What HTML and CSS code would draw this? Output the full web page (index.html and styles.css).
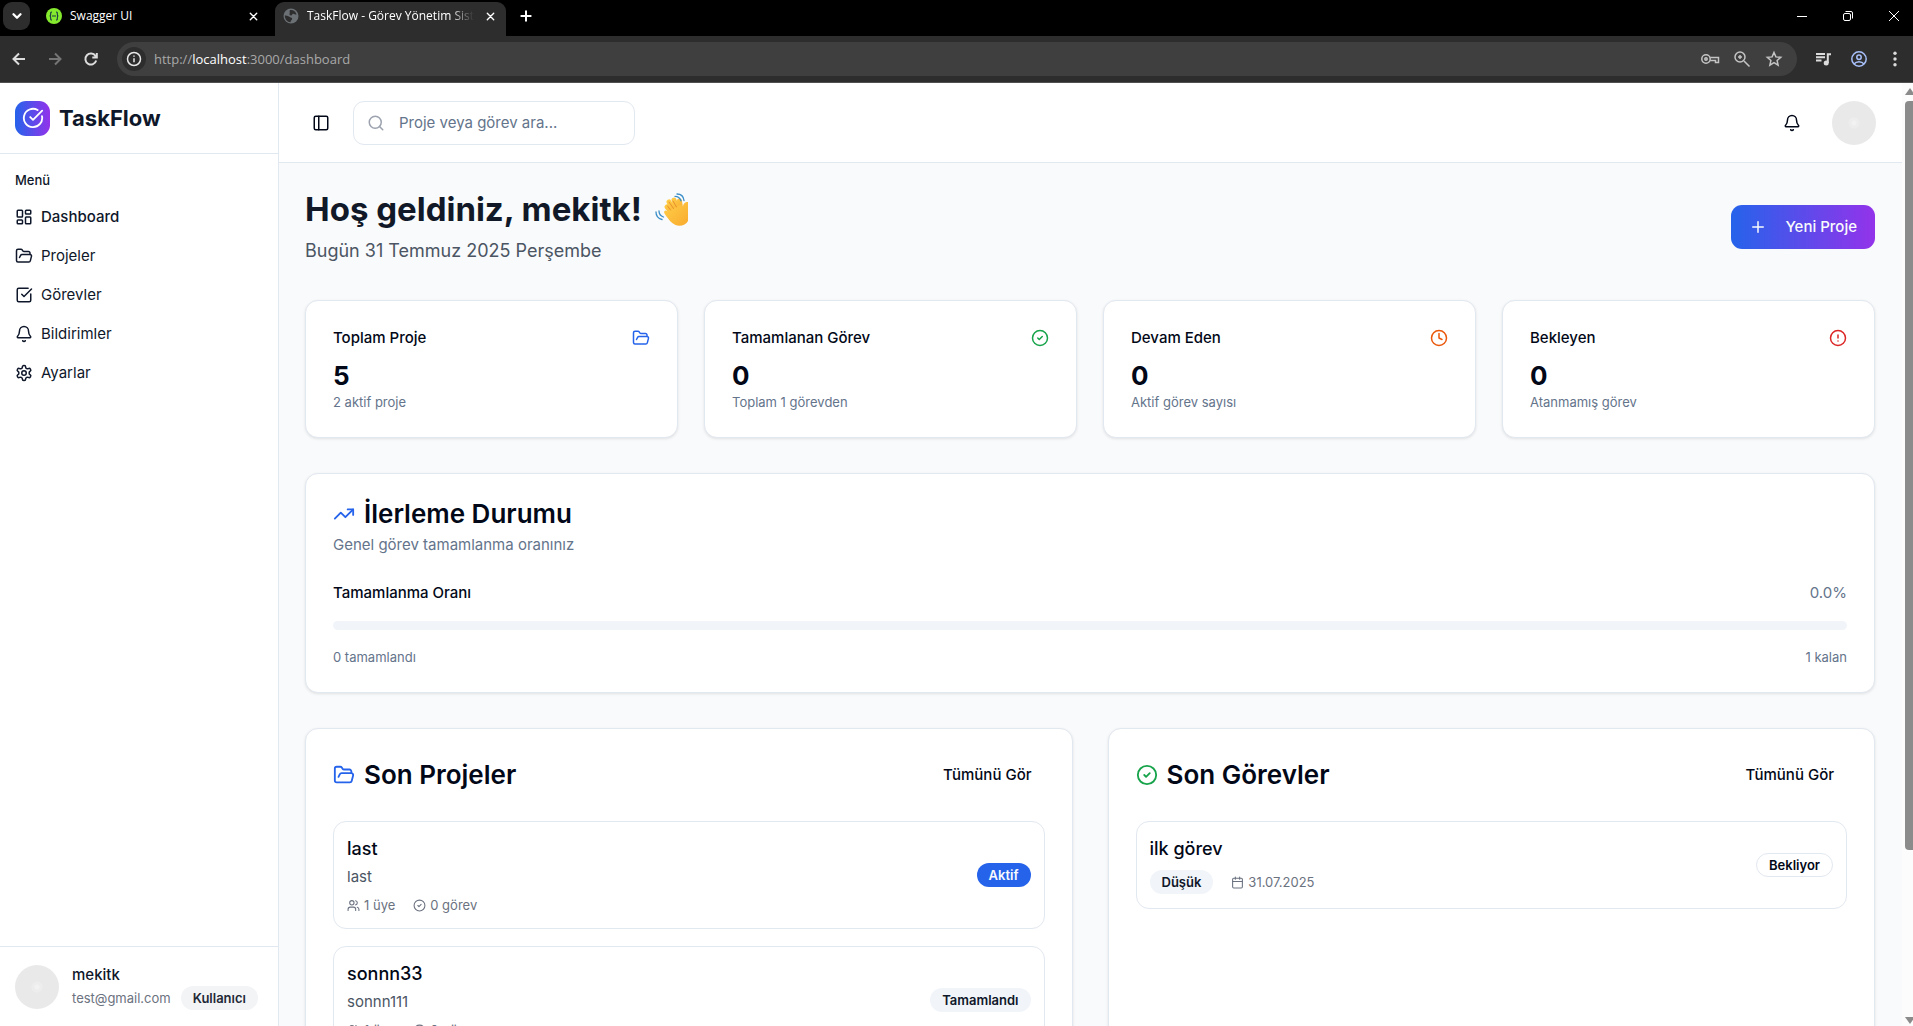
FILE: index.html
```html
<!DOCTYPE html>
<html lang="tr">
<head>
<meta charset="utf-8">
<title>TaskFlow - Görev Yönetim Sistemi</title>
<link rel="stylesheet" href="styles.css">
</head>
<body>
<svg class="sprite" aria-hidden="true">
  <symbol id="check-circle" viewBox="0 0 24 24"><path d="M21.801 10A10 10 0 1 1 17 3.335"/><path d="m9 11 3 3L22 4"/></symbol>
  <symbol id="circle-check" viewBox="0 0 24 24"><circle cx="12" cy="12" r="10"/><path d="m9 12 2 2 4-4"/></symbol>
  <symbol id="dashboard" viewBox="0 0 24 24"><rect width="7" height="9" x="3" y="3" rx="1"/><rect width="7" height="5" x="14" y="3" rx="1"/><rect width="7" height="9" x="14" y="12" rx="1"/><rect width="7" height="5" x="3" y="16" rx="1"/></symbol>
  <symbol id="folder" viewBox="0 0 24 24"><path d="m6 14 1.5-2.9A2 2 0 0 1 9.24 10H20a2 2 0 0 1 1.94 2.5l-1.54 6a2 2 0 0 1-1.95 1.5H4a2 2 0 0 1-2-2V5a2 2 0 0 1 2-2h3.9a2 2 0 0 1 1.69.9l.81 1.2a2 2 0 0 0 1.67.9H18a2 2 0 0 1 2 2v2"/></symbol>
  <symbol id="check-square" viewBox="0 0 24 24"><path d="M21 10.500V19a2 2 0 0 1-2 2H5a2 2 0 0 1-2-2V5a2 2 0 0 1 2-2h12.500"/><path d="m9 11 3 3L22 4"/></symbol>
  <symbol id="bell" viewBox="0 0 24 24"><path d="M10.268 21a2 2 0 0 0 3.464 0"/><path d="M3.262 15.326A1 1 0 0 0 4 17h16a1 1 0 0 0 .74-1.673C19.410 13.956 18 12.499 18 8A6 6 0 0 0 6 8c0 4.499-1.411 5.956-2.738 7.326"/></symbol>
  <symbol id="gear" viewBox="0 0 24 24"><path d="M12.220 2h-.44a2 2 0 0 0-2 2v.18a2 2 0 0 1-1 1.730l-.43.25a2 2 0 0 1-2 0l-.15-.08a2 2 0 0 0-2.730.73l-.22.38a2 2 0 0 0 .73 2.730l.15.1a2 2 0 0 1 1 1.720v.51a2 2 0 0 1-1 1.740l-.15.09a2 2 0 0 0-.73 2.730l.22.38a2 2 0 0 0 2.730.73l.15-.08a2 2 0 0 1 2 0l.43.25a2 2 0 0 1 1 1.730V20a2 2 0 0 0 2 2h.44a2 2 0 0 0 2-2v-.18a2 2 0 0 1 1-1.730l.43-.25a2 2 0 0 1 2 0l.15.08a2 2 0 0 0 2.730-.73l.22-.39a2 2 0 0 0-.73-2.730l-.15-.08a2 2 0 0 1-1-1.740v-.5a2 2 0 0 1 1-1.740l.15-.09a2 2 0 0 0 .73-2.730l-.22-.38a2 2 0 0 0-2.730-.73l-.15.08a2 2 0 0 1-2 0l-.43-.25a2 2 0 0 1-1-1.730V4a2 2 0 0 0-2-2z"/><circle cx="12" cy="12" r="3"/></symbol>
  <symbol id="panel" viewBox="0 0 24 24"><rect width="18" height="18" x="3" y="3" rx="2"/><path d="M9 3v18"/></symbol>
  <symbol id="search" viewBox="0 0 24 24"><circle cx="11" cy="11" r="8"/><path d="m21 21-4.300-4.300"/></symbol>
  <symbol id="plus" viewBox="0 0 24 24"><path d="M5 12h14M12 5v14"/></symbol>
  <symbol id="clock" viewBox="0 0 24 24"><circle cx="12" cy="12" r="10"/><path d="M12 6v6l4 2"/></symbol>
  <symbol id="alert" viewBox="0 0 24 24"><circle cx="12" cy="12" r="10"/><path d="M12 8v4M12 16h.01"/></symbol>
  <symbol id="trend" viewBox="0 0 24 24"><path d="m22 7-8.500 8.500-5-5L2 17"/><path d="M16 7h6v6"/></symbol>
  <symbol id="users" viewBox="0 0 24 24"><path d="M16 21v-2a4 4 0 0 0-4-4H6a4 4 0 0 0-4 4v2"/><circle cx="9" cy="7" r="4"/><path d="M22 21v-2a4 4 0 0 0-3-3.870M16 3.130a4 4 0 0 1 0 7.750"/></symbol>
  <symbol id="calendar" viewBox="0 0 24 24"><path d="M8 2v4M16 2v4M3 10h18"/><rect width="18" height="18" x="3" y="4" rx="2"/></symbol>
  <symbol id="x" viewBox="0 0 24 24"><path d="M5 5l14 14M19 5L5 19"/></symbol>
</svg>

<div class="window">
  <header class="tabstrip">
    <button class="tab-search" aria-label="Sekmelerde ara"><svg class="icon" viewBox="0 0 12 12"><path d="M3 4.500l3 3 3-3"/></svg></button>
    <div class="tab">
      <svg class="favicon" viewBox="0 0 16 16"><circle cx="8" cy="8" r="8" fill="#85ea2d"/><g fill="none" stroke="#173647" stroke-width="1.100"><path d="M6 4c-1.600 0-1.300 1.200-1.300 2.300S4.200 8 3.600 8c.6 0 1.100.6 1.100 1.700S4.400 12 6 12M10 4c1.600 0 1.300 1.200 1.300 2.300S11.800 8 12.400 8c-.6 0-1.100.6-1.100 1.700S11.600 12 10 12M6 8h4"/></g></svg>
      <span class="tab-title">Swagger UI</span>
      <button class="tab-close" aria-label="Kapat"><svg class="icon"><use href="#x"/></svg></button>
    </div>
    <div class="tab tab-active">
      <svg class="favicon" viewBox="0 0 16 16"><circle cx="8" cy="8" r="7.500" fill="#6b7075"/><path fill="#2d2d2d" d="M7 2c3-.6 6 1.500 6.500 4.500-1.500.5-2-1-3.500-.8-1 .2-.6 1.600-2 1.700-1.400 0-1.800-1-1.300-2.100C7.200 4.200 6 3.500 7 2zM1.800 7.500c2-.3 3.700.5 5 1.600 1.300 1 2.200.2 2.400 1.600.1 1.500-1.200 1.300-1.400 2.300l-.3 1.300C4.300 14.100 1.700 11 1.800 7.500z"/></svg>
      <span class="tab-title tab-title-fade">TaskFlow - Görev Yönetim Sistemi</span>
      <button class="tab-close" aria-label="Kapat"><svg class="icon"><use href="#x"/></svg></button>
    </div>
    <button class="new-tab" aria-label="Yeni sekme"><svg class="icon"><use href="#plus"/></svg></button>
    <div class="window-controls">
      <button aria-label="Küçült"><svg viewBox="0 0 12 12"><path d="M1 6.500h10"/></svg></button>
      <button aria-label="Geri yükle"><svg viewBox="0 0 12 12"><rect x="1.500" y="3.500" width="7" height="7" rx="1.500"/><path d="M3.500 1.500H9a1.500 1.500 0 0 1 1.500 1.500v5.500"/></svg></button>
      <button aria-label="Pencereyi kapat"><svg viewBox="0 0 12 12"><path d="M1 1l10 10M11 1L1 11"/></svg></button>
    </div>
  </header>

  <div class="toolbar">
    <button class="nav-button" aria-label="Geri"><svg class="icon" viewBox="0 0 16 16"><path d="M14 8H2.500M8 2.500L2.500 8 8 13.500"/></svg></button>
    <button class="nav-button nav-off" aria-label="İleri"><svg class="icon" viewBox="0 0 16 16"><path d="M2 8h11.500M8 2.500L13.500 8 8 13.500"/></svg></button>
    <button class="nav-button" aria-label="Yenile"><svg class="icon" viewBox="0 0 16 16"><path d="M13.200 9.500A5.500 5.500 0 1 1 12.500 5l1 1.200M13.800 2v4.500H9.300"/></svg></button>
    <div class="address">
      <span class="site-info"><svg class="icon" viewBox="0 0 16 16"><circle cx="8" cy="8" r="6.500"/><path d="M8 7.200v4M8 4.400v1.400"/></svg></span>
      <span class="url">http://<b>localhost</b>:3000/dashboard</span>
      <svg class="address-icon" viewBox="0 0 20 20"><circle cx="6" cy="10" r="4.200"/><circle cx="6" cy="10" r="1.200"/><path d="M10.200 8.500h8.300v5h-3v-2h-5.300"/></svg>
      <svg class="address-icon" viewBox="0 0 20 20"><circle cx="8" cy="8" r="5"/><path d="M12 12l5.500 5.500M8 6v4M6 8h4"/></svg>
      <svg class="address-icon" viewBox="0 0 20 20"><path d="M10 3.500l1.900 4.400 4.800.4-3.600 3.200 1 4.700-4.100-2.500-4.100 2.500 1-4.700-3.600-3.200 4.800-.4z"/></svg>
    </div>
    <button class="nav-button" aria-label="Medya"><svg class="icon" viewBox="0 0 16 16"><path d="M1 3h9M1 6.300h9M1 9.600h5.500M12.800 12V3.200H16"/><circle cx="11.200" cy="12" r="1.500" fill="currentColor"/></svg></button>
    <button class="nav-button profile" aria-label="Profil"><svg class="icon" viewBox="0 0 16 16"><circle cx="8" cy="8" r="7.200"/><circle cx="8" cy="6.200" r="2.200"/><path d="M3 13c2.500-3 7.500-3 10 0"/></svg></button>
    <button class="nav-button" aria-label="Menü"><svg viewBox="0 0 16 16"><g fill="#dcdcdc"><circle cx="8" cy="2.300" r="1.700"/><circle cx="8" cy="8" r="1.700"/><circle cx="8" cy="13.700" r="1.700"/></g></svg></button>
  </div>

  <div class="app">
    <aside class="sidebar">
      <div class="brand">
        <span class="brand-mark"><svg class="icon"><use href="#check-circle"/></svg></span>
        <span class="brand-name">TaskFlow</span>
      </div>
      <nav class="menu">
        <div class="menu-label">Menü</div>
        <a class="menu-item menu-current" href="#dashboard-page"><svg class="icon"><use href="#dashboard"/></svg>Dashboard</a>
        <a class="menu-item" href="#projects"><svg class="icon"><use href="#folder"/></svg>Projeler</a>
        <a class="menu-item" href="#tasks"><svg class="icon"><use href="#check-square"/></svg>Görevler</a>
        <a class="menu-item" href="#notifications"><svg class="icon"><use href="#bell"/></svg>Bildirimler</a>
        <a class="menu-item" href="#settings"><svg class="icon"><use href="#gear"/></svg>Ayarlar</a>
      </nav>
      <div class="account">
        <span class="avatar"></span>
        <div class="account-text">
          <div class="account-name">mekitk</div>
          <div class="account-row"><span>test@gmail.com</span><span class="badge badge-gray">Kullanıcı</span></div>
        </div>
      </div>
    </aside>

    <div class="content">
      <header class="topbar">
        <button class="icon-button" aria-label="Kenar çubuğu"><svg class="icon"><use href="#panel"/></svg></button>
        <label class="search"><svg class="icon"><use href="#search"/></svg><input type="search" placeholder="Proje veya görev ara..." aria-label="Proje veya görev ara"></label>
        <div class="topbar-end">
          <button class="icon-button" aria-label="Bildirimler"><svg class="icon"><use href="#bell"/></svg></button>
          <span class="avatar"></span>
        </div>
      </header>

      <main class="page" id="dashboard-page">
        <section class="welcome">
          <div>
            <h1>Hoş geldiniz, mekitk!
              <svg class="wave" viewBox="0 0 33 34" role="img" aria-label="El sallama">
                <defs><linearGradient id="skin" x1="0" y1="0" x2="1" y2="1"><stop offset="0" stop-color="#ffcf4a"/><stop offset="1" stop-color="#f9ab2e"/></linearGradient></defs>
                <g fill="none" stroke="url(#skin)" stroke-linecap="round"><path stroke-width="5" d="M17 20L12 14M20 19L14 9M23 18L19 7M26 18L24.500 8"/></g>
                <path fill="url(#skin)" d="M9.500 20.500c-1.500-2 1-4 2.800-2.300L26 12l2 2c0-4 3-5.500 5-5V28c-2 4-8 6-12.500 4C16 30 12.500 25 9.500 20.500z"/>
                <path fill="none" stroke="#e8912d" stroke-width="1" stroke-linecap="round" d="M15.500 17L12.500 13M18.500 15.500L14 9M21.500 14L18 8"/>
                <path fill="none" stroke="#3b8fc9" stroke-width="1.300" stroke-linecap="round" d="M20 3.300c3 0 5 1.500 6 4.500M22 1c4 0 6.500 2.500 7 6.500M4 18c0 3 1.500 5 4.500 6M1 19c0 4 2 6.500 6 7.500"/>
              </svg>
            </h1>
            <p>Bugün 31 Temmuz 2025 Perşembe</p>
          </div>
          <button class="primary"><svg class="icon"><use href="#plus"/></svg>Yeni Proje</button>
        </section>

        <section class="stats">
          <article class="card"><div class="stat-head"><h2>Toplam Proje</h2><svg class="icon blue"><use href="#folder"/></svg></div><div class="stat-value">5</div><p class="stat-note">2 aktif proje</p></article>
          <article class="card"><div class="stat-head"><h2>Tamamlanan Görev</h2><svg class="icon green"><use href="#circle-check"/></svg></div><div class="stat-value">0</div><p class="stat-note">Toplam 1 görevden</p></article>
          <article class="card"><div class="stat-head"><h2>Devam Eden</h2><svg class="icon orange"><use href="#clock"/></svg></div><div class="stat-value">0</div><p class="stat-note">Aktif görev sayısı</p></article>
          <article class="card"><div class="stat-head"><h2>Bekleyen</h2><svg class="icon red"><use href="#alert"/></svg></div><div class="stat-value">0</div><p class="stat-note">Atanmamış görev</p></article>
        </section>

        <section class="card">
          <h2 class="card-title"><svg class="icon blue"><use href="#trend"/></svg>İlerleme Durumu</h2>
          <p class="card-note">Genel görev tamamlanma oranınız</p>
          <div class="progress-head"><span id="rate">Tamamlanma Oranı</span><span class="muted">0.0%</span></div>
          <div class="progress" role="progressbar" aria-labelledby="rate" aria-valuenow="0" aria-valuemin="0" aria-valuemax="100"></div>
          <div class="progress-foot"><span>0 tamamlandı</span><span>1 kalan</span></div>
        </section>

        <section class="lists">
          <article class="card" id="projects">
            <div class="list-head"><h2 class="card-title"><svg class="icon blue"><use href="#folder"/></svg>Son Projeler</h2><a class="more" href="#projects">Tümünü Gör</a></div>
            <div class="items">
              <div class="item">
                <div><h3>last</h3><p class="item-text">last</p><div class="meta"><span><svg class="icon"><use href="#users"/></svg>1 üye</span><span><svg class="icon"><use href="#circle-check"/></svg>0 görev</span></div></div>
                <span class="badge badge-blue">Aktif</span>
              </div>
              <div class="item">
                <div><h3>sonnn33</h3><p class="item-text">sonnn111</p><div class="meta"><span><svg class="icon"><use href="#users"/></svg>1 üye</span><span><svg class="icon"><use href="#circle-check"/></svg>0 görev</span></div></div>
                <span class="badge badge-light">Tamamlandı</span>
              </div>
            </div>
          </article>
          <article class="card" id="tasks">
            <div class="list-head"><h2 class="card-title"><svg class="icon green"><use href="#circle-check"/></svg>Son Görevler</h2><a class="more" href="#tasks">Tümünü Gör</a></div>
            <div class="items">
              <div class="item">
                <div><h3>ilk görev</h3><div class="task-meta"><span class="badge badge-light">Düşük</span><span class="date"><svg class="icon"><use href="#calendar"/></svg>31.07.2025</span></div></div>
                <span class="badge badge-outline">Bekliyor</span>
              </div>
            </div>
          </article>
        </section>
      </main>
    </div>
    <div class="scrollbar" aria-hidden="true"><span class="arrow-up"></span><span class="thumb"></span><span class="arrow-down"></span></div>
  </div>
</div>
</body>
</html>
```
FILE: styles.css
```css
* { box-sizing: border-box; }
body, h1, h2, h3, p { margin: 0; }
body { font-family: Inter, sans-serif; font-size: 15px; line-height: 22px; color: #020817; background: #fff; }
button { font: inherit; color: inherit; border: 0; padding: 0; background: none; display: flex; align-items: center; justify-content: center; }
a { color: inherit; text-decoration: none; }
svg { flex: none; }
.sprite { position: absolute; width: 0; height: 0; }
.icon { width: 18px; height: 18px; fill: none; stroke: currentColor; stroke-width: 2; stroke-linecap: round; stroke-linejoin: round; }
.blue { color: #2563eb; }
.green { color: #16a34a; }
.orange { color: #ea580c; }
.red { color: #dc2626; }

.window { height: 100vh; display: flex; flex-direction: column; overflow: hidden; }

/* Browser frame */
.tabstrip { flex: none; height: 36px; background: #000; display: flex; align-items: flex-start; color: #fff; font: 12px/16px "Open Sans", sans-serif; }
.tab-search { width: 27px; height: 28px; margin: 2px 8px 0 3px; border-radius: 9px; background: #2d2d2d; }
.tab-search .icon { width: 14px; height: 14px; }
.tab { width: 231px; height: 34px; margin-top: 2px; padding: 0 8px 6px; display: flex; align-items: center; gap: 8px; }
.tab-active { background: #2d2d2d; border-radius: 9px 9px 0 0; margin-left: 6px; }
.favicon { width: 16px; height: 16px; }
.tab-title { flex: 1; white-space: nowrap; overflow: hidden; }
.tab-title-fade { mask-image: linear-gradient(90deg, #000 85%, transparent); }
.tab-close { width: 16px; height: 16px; }
.tab-close .icon { width: 11px; height: 11px; stroke-width: 3; }
.new-tab { width: 28px; height: 28px; margin: 2px 0 0 6px; }
.new-tab .icon { width: 16px; height: 16px; stroke-width: 3; }
.window-controls { display: flex; margin: 0 -4px 0 auto; }
.window-controls button { width: 46px; height: 32px; }
.window-controls svg { width: 12px; height: 12px; fill: none; stroke: #fff; }

.toolbar { flex: none; height: 47px; padding: 0 3px 0 4px; background: #2d2d2d; border-bottom: 1px solid #505050; display: flex; align-items: center; gap: 6px; }
.nav-button { width: 30px; height: 30px; color: #dcdcdc; }
.nav-button svg { width: 16px; height: 16px; }
.nav-button .icon { stroke-width: 2; stroke-linecap: butt; stroke-linejoin: miter; }
.nav-off { color: #757575; }
.profile { color: #a8c0fa; }
.nav-button.profile .icon { stroke-width: 1.5; }
.address { flex: 1; height: 34px; margin: 0 5px; padding: 0 13px 0 5px; border-radius: 17px; background: #3f3f3f; display: flex; align-items: center; gap: 12px; color: #a9a9a9; }
.site-info { width: 24px; height: 24px; margin-right: -4px; border-radius: 50%; background: #2d2d2d; color: #e8e8e8; display: flex; align-items: center; justify-content: center; }
.site-info .icon { width: 16px; height: 16px; stroke-width: 1.5; stroke-linecap: butt; }
.url { flex: 1; font: 13px/20px "Open Sans", sans-serif; }
.url b { color: #fff; font-weight: 400; }
.address-icon { width: 20px; height: 20px; fill: none; stroke: #c4c4c4; stroke-width: 1.5; }

/* Sidebar */
.app { flex: 1; min-height: 0; display: flex; }
.sidebar { flex: none; width: 279px; border-right: 1px solid #e2e8f0; display: flex; flex-direction: column; color: #0f172a; }
.brand { height: 71px; padding: 0 15px; border-bottom: 1px solid #e2e8f0; display: flex; align-items: center; gap: 9px; }
.brand-mark { width: 35px; height: 35px; border-radius: 11px; background: linear-gradient(90deg, #2563eb, #9333ea); color: #fff; display: flex; align-items: center; justify-content: center; }
.brand-mark .icon { width: 22px; height: 22px; }
.brand-name { font-size: 22px; line-height: 31px; font-weight: 700; }
.menu { flex: 1; padding: 9px; display: flex; flex-direction: column; gap: 3px; }
.menu-label { height: 33px; padding: 0 6px; font-size: 13px; line-height: 34px; font-weight: 500; }
.menu-item { height: 36px; padding: 0 6px; display: flex; align-items: center; gap: 8px; }
.menu-current { font-weight: 500; }
.account { height: 80px; padding: 0 15px; border-top: 1px solid #e2e8f0; display: flex; align-items: center; gap: 13px; }
.avatar { flex: none; width: 44px; height: 44px; border-radius: 50%; background: radial-gradient(circle, #f2f2f2 2px, #ededed 3px 5px, #e9e9e9 6px); }
.account-name { font-weight: 500; }
.account-row { display: flex; align-items: center; gap: 10px; font-size: 13px; color: #6b7280; }

.badge { height: 24px; padding: 0 12px; border-radius: 12px; font-size: 13px; line-height: 24px; font-weight: 600; white-space: nowrap; color: #0f172a; }
.badge-gray { background: #f3f4f6; color: #1f2937; }
.badge-light { background: #f1f5f9; }
.badge-blue { background: #2563eb; color: #f8fafc; }
.badge-outline { border: 1px solid #e2e8f0; line-height: 22px; color: #020817; }

/* Main column */
.content { flex: 1; min-width: 0; display: flex; flex-direction: column; overflow: hidden; background: #f9fafb; }
.topbar { flex: none; height: 80px; padding: 0 26px; background: #fff; border-bottom: 1px solid #e2e8f0; display: flex; align-items: center; gap: 16px; }
.icon-button { width: 32px; height: 32px; }
.search { width: 282px; height: 44px; padding: 0 13px; border: 1px solid #e2e8f0; border-radius: 11px; display: flex; align-items: center; gap: 14px; color: #9ca3af; }
.search input { flex: 1; min-width: 0; padding: 0; border: 0; outline: 0; background: none; font: inherit; color: #020817; }
.search input::placeholder { color: #64748b; opacity: 1; }
.topbar-end { margin-left: auto; display: flex; align-items: center; gap: 24px; }

.page { padding: 26px 27px 26px 26px; display: flex; flex-direction: column; gap: 35px; }
.welcome { display: flex; align-items: center; justify-content: space-between; }
h1 { font-size: 33px; line-height: 40px; font-weight: 700; color: #111827; }
.wave { width: 33px; height: 34px; margin-left: 5px; vertical-align: -6px; }
.welcome p { margin-top: 8px; font-size: 18px; line-height: 28px; color: #4b5563; }
.primary { height: 44px; padding: 0 18px; gap: 18px; border-radius: 11px; color: #f8fafc; font-weight: 500; background: linear-gradient(90deg, #2563eb, #9333ea); }

.card { padding: 26px 27px; border: 1px solid #e2e8f0; border-radius: 13px; background: #fff; box-shadow: 0 1px 3px rgba(0, 0, 0, .1); }
.stats { display: grid; grid-template-columns: repeat(4, 1fr); gap: 26px; }
.stat-head { display: flex; align-items: center; justify-content: space-between; margin-bottom: 9px; }
.stat-head h2 { font-size: 15px; line-height: 22px; font-weight: 500; }
.stat-value { font-size: 26px; line-height: 35px; font-weight: 700; }
.stat-note { font-size: 13px; line-height: 18px; color: #64748b; }

.card-title { display: flex; align-items: center; gap: 9px; font-size: 26px; line-height: 28px; font-weight: 600; }
.card-title .icon { width: 22px; height: 22px; }
.card-note { margin: 6px 0 26px; color: #64748b; }
.progress-head { display: flex; justify-content: space-between; font-weight: 500; }
.muted { font-weight: 400; color: #64748b; }
.progress { height: 9px; margin: 17px 0 18px; border-radius: 5px; background: #f1f5f9; }
.progress-foot { display: flex; justify-content: space-between; font-size: 13px; line-height: 18px; color: #64748b; }

.lists { display: grid; grid-template-columns: 1fr 1fr; gap: 35px; }
.list-head { height: 40px; margin-bottom: 26px; display: flex; align-items: center; justify-content: space-between; }
.more { padding: 0 13px; font-weight: 500; }
.items { display: flex; flex-direction: column; gap: 17px; }
.item { padding: 14px 13px; border: 1px solid #e2e8f0; border-radius: 13px; display: flex; align-items: center; justify-content: space-between; }
.item h3 { font-size: 18px; line-height: 26px; font-weight: 500; }
.item-text { margin-top: 4px; color: #4b5563; }
.meta { margin-top: 8px; display: flex; gap: 18px; font-size: 13px; line-height: 18px; color: #6b7280; }
.meta span, .date { display: flex; align-items: center; gap: 4px; }
.meta .icon, .date .icon { width: 13px; height: 13px; }
.task-meta { margin-top: 8px; display: flex; align-items: center; gap: 18px; font-size: 13px; color: #6b7280; }

.scrollbar { flex: none; width: 11px; padding: 5px 0 2px 3px; background: #fcfcfc; display: flex; flex-direction: column; justify-content: space-between; overflow: hidden; }
.arrow-up { flex: none; border: 5px solid transparent; border-top: 0; border-bottom: 7px solid #8b8b8b; width: 10px; }
.arrow-down { flex: none; border: 5px solid transparent; border-bottom: 0; border-top: 7px solid #8b8b8b; width: 10px; }
.thumb { height: 80%; width: 8px; margin: 6px 0 auto; border-radius: 4px 0 0 4px; background: #8b8b8b; }
```
